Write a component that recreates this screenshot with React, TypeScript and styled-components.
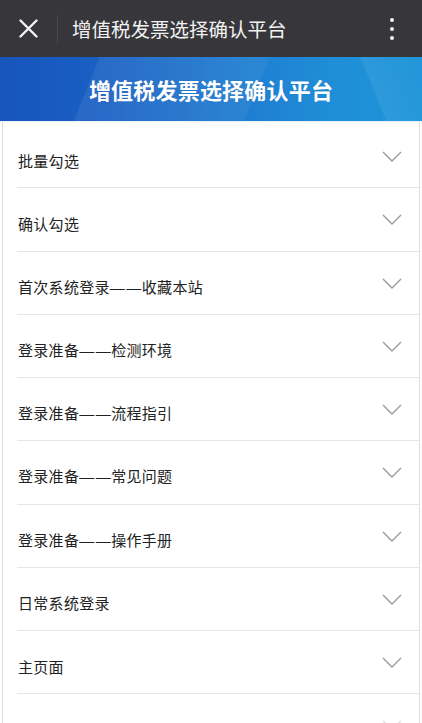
import styled, { createGlobalStyle } from 'styled-components'

const GlobalStyle = createGlobalStyle`
  html, body {
    margin: 0;
    padding: 0;
    background: #ffffff;
  }
  body {
    font-family: "Noto Sans CJK SC", "Noto Sans", sans-serif;
    overflow: hidden;
  }
`

const Page = styled.div`
  width: 422px;
  height: 723px;
  overflow: hidden;
  display: flex;
  flex-direction: column;
`

const TopBar = styled.div`
  height: 57px;
  flex-shrink: 0;
  background: #37373b;
  display: flex;
  align-items: center;
  padding: 0 0 0 19px;
`

const CloseButton = styled.div`
  width: 19px;
  height: 19px;
  display: flex;
`

const Divider = styled.div`
  width: 1px;
  height: 28px;
  background: #4a4a4f;
  margin: 0 14px 0 19px;
`

const TopTitle = styled.div`
  flex: 1;
  color: #f2f2f2;
  font-size: 19.5px;
  line-height: 24px;
  white-space: nowrap;
`

const Kebab = styled.div`
  width: 56px;
  display: flex;
  flex-direction: column;
  align-items: center;
  gap: 5px;
  padding-right: 2px;

  span {
    width: 4px;
    height: 4px;
    border-radius: 50%;
    background: #f4f4f4;
  }
`

const Banner = styled.div`
  height: 64px;
  flex-shrink: 0;
  display: flex;
  align-items: center;
  justify-content: center;
  background:
    linear-gradient(112deg, transparent 0%, transparent 22%, rgba(255, 255, 255, 0.07) 22.5%, rgba(255, 255, 255, 0.05) 60%, transparent 60.5%),
    linear-gradient(68deg, transparent 0%, transparent 86%, rgba(255, 255, 255, 0.07) 86.5%, rgba(255, 255, 255, 0.02) 100%),
    linear-gradient(90deg, #1754bb 0%, #1a60c4 25%, #1f7bd0 55%, #1f8fd8 80%, #1c94d8 100%);
  border-bottom: 1px solid #e9f1f8;
`

const BannerTitle = styled.h1`
  margin: 0;
  color: #ffffff;
  font-size: 22px;
  font-weight: 700;
  letter-spacing: 0.2px;
  text-shadow: 0 0 1px rgba(0, 0, 0, 0.15);
`

const List = styled.div`
  flex: 1;
  margin: 0 2px;
  padding-top: 3px;
  border-left: 1px solid #dcdcdc;
  border-right: 1px solid #dcdcdc;
`

const Row = styled.div<{ $faded?: boolean }>`
  height: 63.25px;
  box-sizing: border-box;
  margin-left: 14px;
  padding-top: 9px;
  border-bottom: 1px solid #e6e6e6;
  display: flex;
  align-items: center;
  opacity: ${(p) => (p.$faded ? 0.35 : 1)};
`

const Label = styled.div`
  flex: 1;
  color: #222222;
  font-size: 15px;
  line-height: 20px;
  letter-spacing: 0.3px;
  padding-left: 1px;
`

const Dashes = styled.span`
  font-family: "Liberation Sans", sans-serif;
  letter-spacing: 1.5px;
  margin-right: -1px;
`

const Chevron = styled.svg`
  align-self: flex-start;
  margin-top: 17px;
  margin-right: 17px;
  width: 20px;
  height: 11px;
`

const items = [
  '批量勾选',
  '确认勾选',
  '首次系统登录——收藏本站',
  '登录准备——检测环境',
  '登录准备——流程指引',
  '登录准备——常见问题',
  '登录准备——操作手册',
  '日常系统登录',
  '主页面',
  '发票查询',
]

function renderLabel(text: string) {
  const parts = text.split('——')
  if (parts.length === 1) return text
  return (
    <>
      {parts[0]}
      <Dashes>——</Dashes>
      {parts[1]}
    </>
  )
}

export default function App() {
  return (
    <>
      <GlobalStyle />
      <Page>
        <TopBar>
          <CloseButton>
            <svg width="19" height="19" viewBox="0 0 19 19">
              <path d="M1.5 1.5 L17.5 17.5 M17.5 1.5 L1.5 17.5" stroke="#f4f4f4" strokeWidth="2.4" strokeLinecap="round" />
            </svg>
          </CloseButton>
          <Divider />
          <TopTitle>增值税发票选择确认平台</TopTitle>
          <Kebab>
            <span />
            <span />
            <span />
          </Kebab>
        </TopBar>
        <Banner>
          <BannerTitle>增值税发票选择确认平台</BannerTitle>
        </Banner>
        <List>
          {items.map((item, i) => (
            <Row key={i} $faded={i === items.length - 1}>
              <Label>{renderLabel(item)}</Label>
              <Chevron viewBox="0 0 20 11">
                <path d="M1 1 L10 10 L19 1" fill="none" stroke="#9a9a9a" strokeWidth="1.4" />
              </Chevron>
            </Row>
          ))}
        </List>
      </Page>
    </>
  )
}
